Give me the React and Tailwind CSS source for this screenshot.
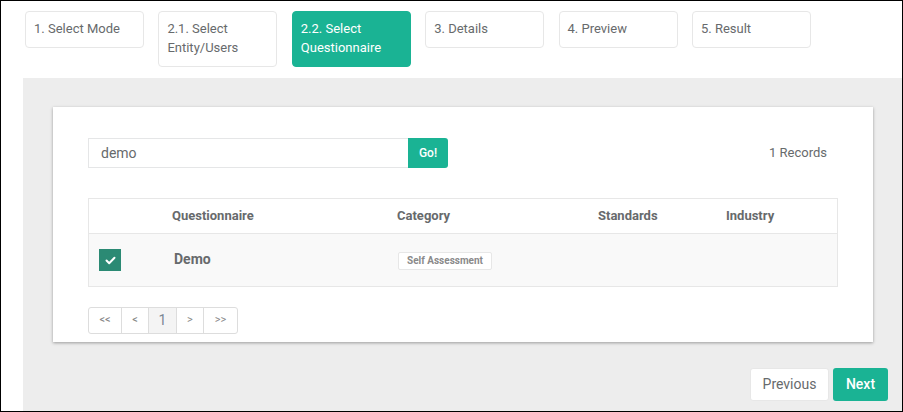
import React, { useState } from "react";

const steps = [
  { label: "1. Select Mode" },
  { label: "2.1. Select Entity/Users" },
  { label: "2.2. Select Questionnaire", active: true },
  { label: "3. Details" },
  { label: "4. Preview" },
  { label: "5. Result" },
];

const App = () => {
  const [query, setQuery] = useState("demo");
  const [checked, setChecked] = useState(true);

  return (
    <div className="w-[903px] h-[412px] border border-black bg-white overflow-hidden flex flex-col font-['Roboto',sans-serif] text-[#676a6c]">
      {/* Wizard steps */}
      <div className="flex items-start gap-[14.4px] pl-[24px] pt-[10px]">
        {steps.map((step) => (
          <div
            key={step.label}
            className={
              step.active
                ? "w-[119px] border border-[#1ab394] bg-[#1ab394] text-white rounded-[4px] px-[8px] pt-[7px] pb-[9px] text-[13px] leading-[19px]"
                : "w-[119px] border border-[#e7e7e7] bg-white rounded-[4px] px-[8px] pt-[7px] pb-[9px] text-[13px] leading-[19px]"
            }
          >
            {step.label}
          </div>
        ))}
      </div>

      {/* Content area */}
      <div className="flex-1 ml-[22px] mt-[11px] bg-[#ededed] pt-[29px] pl-[30px] pr-[29px]">
        <div className="bg-white shadow-[0_1px_3px_rgba(0,0,0,0.35)] pl-[35px] pr-[35px] pt-[31px] pb-[8px]">
          <div className="flex items-center justify-between">
            <div className="flex">
              <input
                value={query}
                onChange={(e) => setQuery(e.target.value)}
                className="w-[320px] h-[30px] border border-[#e5e6e7] border-r-0 px-[12px] text-[14px] text-[#676a6c] outline-none"
              />
              <button className="w-[40px] h-[30px] bg-[#1ab394] text-white text-[12px] font-medium rounded-r-[3px]">
                Go!
              </button>
            </div>
            <span className="text-[13px] pr-[11px]">1 Records</span>
          </div>

          {/* Table */}
          <div className="mt-[30px] border border-[#e7e7e7]">
            <div className="flex h-[35px] items-center text-[13px] font-bold border-b border-[#e7e7e7]">
              <div className="w-[71px]"></div>
              <div className="w-[225px] pl-[12px]">Questionnaire</div>
              <div className="w-[201px] pl-[12px]">Category</div>
              <div className="w-[128px] pl-[12px]">Standards</div>
              <div className="flex-1 pl-[12px]">Industry</div>
            </div>
            <div className="flex h-[52px] items-center bg-[#f9f9f9]">
              <div className="w-[71px] pl-[10px]">
                <button
                  onClick={() => setChecked(!checked)}
                  className="w-[22px] h-[22px] bg-[#2b8a74] flex items-center justify-center"
                >
                  {checked && (
                    <svg width="11" height="9" viewBox="0 0 11 9" fill="none">
                      <path
                        d="M1.5 4.5L4.2 7.2L9.5 1.8"
                        stroke="white"
                        strokeWidth="2"
                        strokeLinecap="round"
                        strokeLinejoin="round"
                      />
                    </svg>
                  )}
                </button>
              </div>
              <div className="w-[225px] pl-[14px] pb-[1px] text-[14px] font-bold">Demo</div>
              <div className="w-[201px] pl-[13px] pb-[2px]">
                <span className="inline-block border border-[#e7e7e7] bg-white rounded-[2px] px-[8px] h-[18px] leading-[16px] text-[10px] font-bold text-[#8a8a8a]">
                  Self Assessment
                </span>
              </div>
              <div className="w-[128px]"></div>
              <div className="flex-1"></div>
            </div>
          </div>

          {/* Pagination */}
          <div className="mt-[20px] inline-flex border border-[#dddddd] rounded-[3px] h-[27px] text-[#888888]">
            <button className="w-[33px] border-r border-[#dddddd] text-[11px]">&lt;&lt;</button>
            <button className="w-[27px] border-r border-[#dddddd] text-[11px]">&lt;</button>
            <button className="w-[28px] border-r border-[#dddddd] bg-[#f4f4f4] text-[14px] text-[#7a8794]">1</button>
            <button className="w-[27px] border-r border-[#dddddd] text-[11px]">&gt;</button>
            <button className="w-[33px] text-[11px]">&gt;&gt;</button>
          </div>
        </div>

        {/* Wizard navigation */}
        <div className="flex justify-end gap-[4px] mt-[26px] mr-[-15px]">
          <button className="w-[79px] h-[33px] bg-white border border-[#e7e7e7] rounded-[3px] text-[14px] text-[#676a6c]">
            Previous
          </button>
          <button className="w-[55px] h-[33px] bg-[#1ab394] rounded-[3px] text-[14px] font-medium text-white">
            Next
          </button>
        </div>
      </div>
    </div>
  );
};

export default App;
